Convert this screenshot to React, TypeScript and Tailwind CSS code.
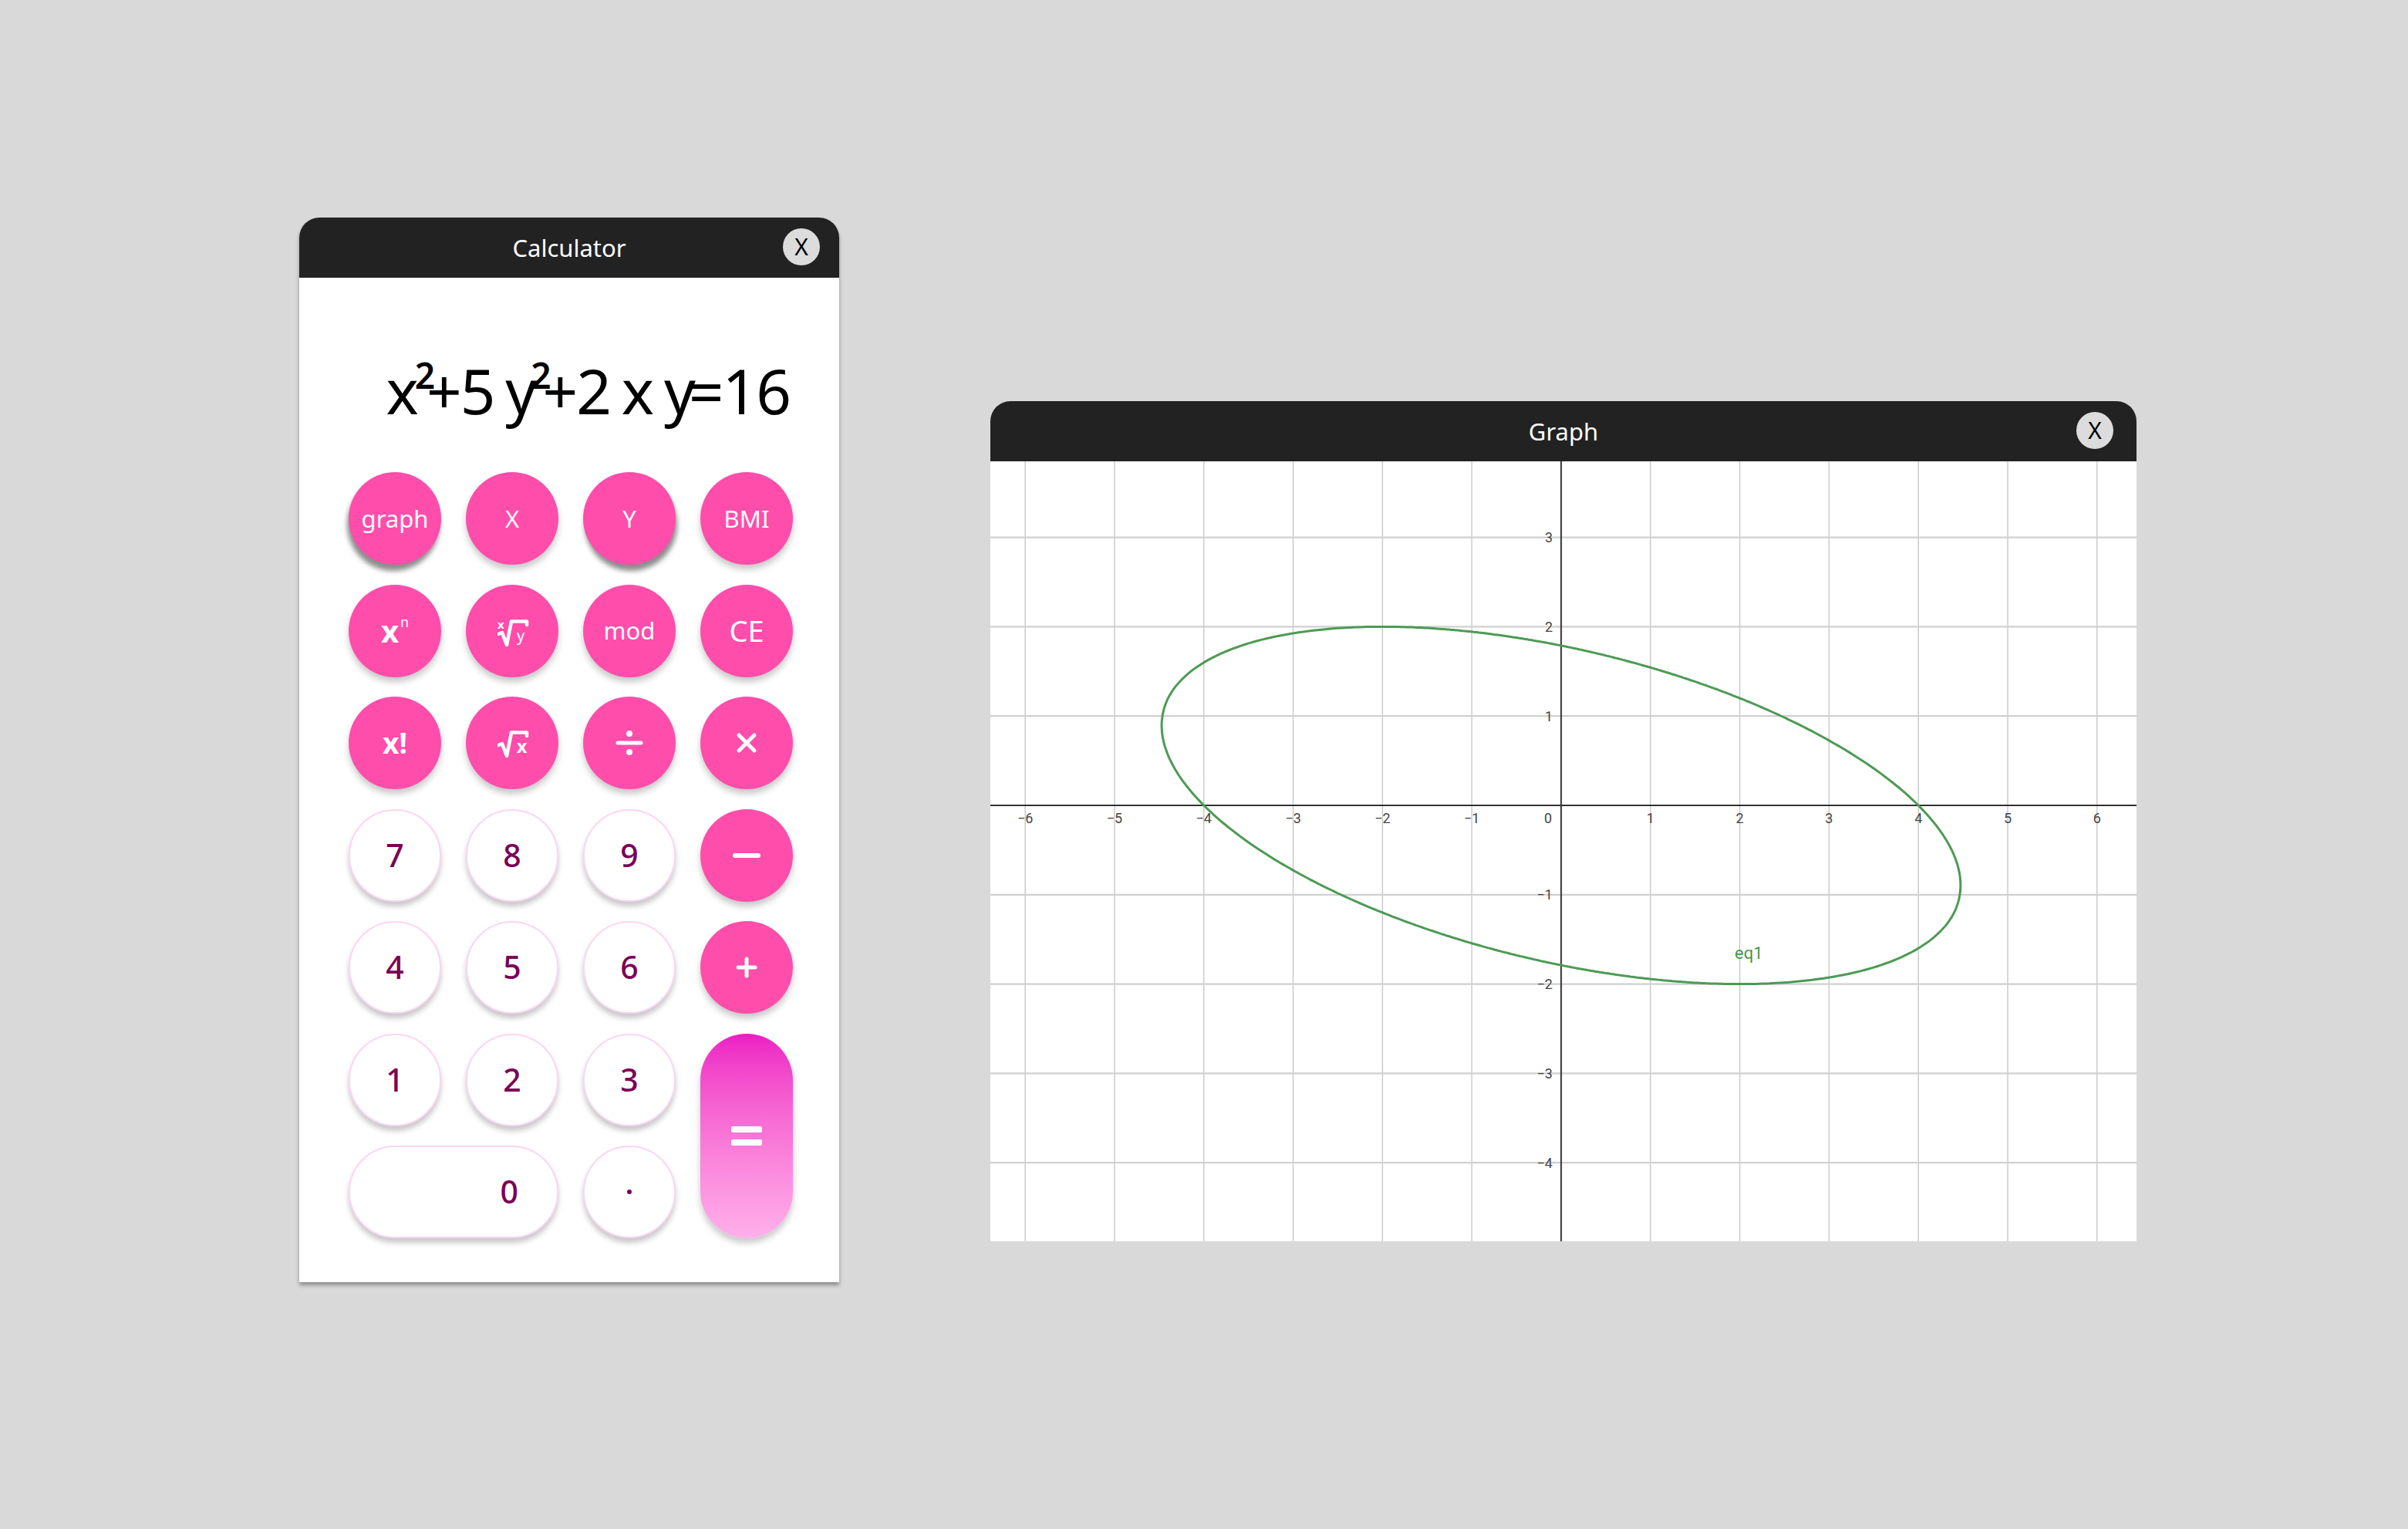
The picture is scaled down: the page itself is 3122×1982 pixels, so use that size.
import React from "react";

const U = 115.8;
const OX = 740;
const OY = 446;
const GW = 1486;
const GH = 1011;

function ellipsePath() {
  const pts: string[] = [];
  for (let i = 0; i <= 720; i++) {
    const t = (i / 720) * Math.PI * 2;
    const c = Math.cos(t);
    const s = Math.sin(t);
    const r = Math.sqrt(16 / (c * c + 5 * s * s + 2 * s * c));
    pts.push(`${(OX + r * c * U).toFixed(1)},${(OY - r * s * U).toFixed(1)}`);
  }
  return "M" + pts.join("L") + "Z";
}

function label(n: number) {
  return n < 0 ? `\u2212${-n}` : `${n}`;
}

function GraphPlot() {
  const xs = [-6, -5, -4, -3, -2, -1, 1, 2, 3, 4, 5, 6];
  const ys = [-4, -3, -2, -1, 1, 2, 3];
  return (
    <svg width={GW} height={GH} className="block">
      <rect x={0} y={0} width={GW} height={GH} fill="#ffffff" />
      {xs.map((k) => (
        <line key={"vx" + k} x1={OX + k * U} x2={OX + k * U} y1={0} y2={GH} stroke="#c8c8c8" strokeWidth={1.4} />
      ))}
      {ys.map((k) => (
        <line key={"hy" + k} x1={0} x2={GW} y1={OY - k * U} y2={OY - k * U} stroke="#d0d0d0" strokeWidth={2.2} />
      ))}
      <line x1={OX} x2={OX} y1={0} y2={GH} stroke="#444444" strokeWidth={2.2} />
      <line x1={0} x2={GW} y1={OY} y2={OY} stroke="#333333" strokeWidth={2} />
      <g fontFamily="Roboto, sans-serif" fontSize={18} fill="#454545">
        {xs.map((k) => (
          <text key={"lx" + k} x={OX + k * U} y={OY + 23} textAnchor="middle">
            {label(k)}
          </text>
        ))}
        <text x={OX - 17} y={OY + 23} textAnchor="middle">
          0
        </text>
        {ys.map((k) => (
          <text key={"ly" + k} x={OX - 11} y={OY - k * U + 6.5} textAnchor="end">
            {label(k)}
          </text>
        ))}
      </g>
      <path d={ellipsePath()} fill="none" stroke="#4d9a55" strokeWidth={3} />
      <text x={965} y={645} fontFamily="Roboto, sans-serif" fontSize={22} fill="#3f9a4a">
        eq1
      </text>
    </svg>
  );
}

function RootXY() {
  return (
    <svg width={44} height={42} viewBox="0 -4 44 42" className="ml-[6px]">
      <text x={0} y={14} fontFamily="Noto Sans, sans-serif" fontSize={15} fontWeight={700} fill="#fff">
        x
      </text>
      <path d="M1 21 L6 19 L12 35 L18 4.5 L38 4.5 L38 9" fill="none" stroke="#fff" strokeWidth={4.5} strokeLinejoin="round" strokeLinecap="round" />
      <text x={25} y={30} fontFamily="Noto Sans, sans-serif" fontSize={20} fill="#fff">
        y
      </text>
    </svg>
  );
}

function RootX() {
  return (
    <svg width={44} height={38} viewBox="0 0 44 38" className="ml-[6px] mt-[2px]">
      <path d="M1 21 L6 19 L12 35 L18 4.5 L38 4.5 L38 9" fill="none" stroke="#fff" strokeWidth={4.5} strokeLinejoin="round" strokeLinecap="round" />
      <text x={25} y={31} fontFamily="Noto Sans, sans-serif" fontSize={23} fontWeight={700} fill="#fff">
        x
      </text>
    </svg>
  );
}

function Bars({ kind }: { kind: "minus" | "plus" | "times" | "divide" }) {
  if (kind === "minus")
    return (
      <svg width={36} height={10} viewBox="0 0 36 10">
        <line x1={3} y1={5} x2={33} y2={5} stroke="#fff" strokeWidth={6} strokeLinecap="round" />
      </svg>
    );
  if (kind === "plus")
    return (
      <svg width={28} height={28} viewBox="0 0 28 28">
        <line x1={3} y1={14} x2={25} y2={14} stroke="#fff" strokeWidth={5} strokeLinecap="round" />
        <line x1={14} y1={3} x2={14} y2={25} stroke="#fff" strokeWidth={5} strokeLinecap="round" />
      </svg>
    );
  if (kind === "times")
    return (
      <svg width={30} height={30} viewBox="0 0 30 30">
        <line x1={5} y1={5} x2={25} y2={25} stroke="#fff" strokeWidth={5} strokeLinecap="round" />
        <line x1={25} y1={5} x2={5} y2={25} stroke="#fff" strokeWidth={5} strokeLinecap="round" />
      </svg>
    );
  return (
    <svg width={36} height={34} viewBox="0 0 36 34">
      <circle cx={18} cy={5} r={4} fill="#fff" />
      <line x1={3} y1={17} x2={33} y2={17} stroke="#fff" strokeWidth={5} strokeLinecap="round" />
      <circle cx={18} cy={29} r={4} fill="#fff" />
    </svg>
  );
}

const pink =
  "w-[120px] h-[120px] rounded-full bg-[#ff4dab] text-white flex items-center justify-center shadow-[0_6px_8px_rgba(0,0,0,0.22)]";
const pinkDark =
  "w-[120px] h-[120px] rounded-full bg-[#ff4dab] text-white flex items-center justify-center";
const digit =
  "w-[120px] h-[120px] rounded-full bg-white border-2 border-[#fbd6f2] text-[#7b0058] text-[41px] font-medium flex items-center justify-center shadow-[0_6px_7px_rgba(0,0,0,0.22)]";

function Calculator() {
  return (
    <div className="absolute left-[388px] top-[282px] w-[700px] rounded-t-[26px] bg-white shadow-[0_4px_5px_rgba(0,0,0,0.35)] font-['Noto_Sans',sans-serif]">
      <div className="relative h-[78px] rounded-t-[26px] bg-[#222222] flex items-center justify-center">
        <span className="text-white text-[31px]">Calculator</span>
        <div className="absolute right-[25px] top-[14px] w-[48px] h-[48px] rounded-full bg-[#dcdcdc] flex items-center justify-center text-black text-[30px] leading-none">
          X
        </div>
      </div>
      <div className="h-[252px] pt-[106px] pr-[64px] text-right text-black text-[80px] leading-none tracking-[-2px] [word-spacing:-4px] whitespace-nowrap">
        x<span className="relative -top-[33px] text-[46px] font-semibold -ml-[3px] -mr-[9px]">2</span>+5 y
        <span className="relative -top-[33px] text-[46px] font-semibold -ml-[6px] -mr-[9px]">2</span>+2 x y
        <span className="-ml-[7px]">=16</span>
      </div>
      <div className="grid grid-cols-4 gap-x-[32px] gap-y-[25.5px] auto-rows-[120px] pl-[64px] pr-[60px] pb-[57px]">
        <div className={pinkDark + " shadow-[-2px_8px_6px_rgba(0,0,0,0.45)] text-[31px]"}>graph</div>
        <div className={pink + " text-[31px]"}>X</div>
        <div className={pinkDark + " shadow-[2px_8px_6px_rgba(0,0,0,0.45)] text-[31px]"}>Y</div>
        <div className={pink + " text-[31px]"}>BMI</div>

        <div className={pink}>
          <span className="text-[40px] font-bold leading-none">x</span>
          <span className="text-[18px] leading-none self-start mt-[39px] ml-[2px]">n</span>
        </div>
        <div className={pink}>
          <RootXY />
        </div>
        <div className={pink + " text-[31px]"}>mod</div>
        <div className={pink + " text-[38px]"}>CE</div>

        <div className={pink + " text-[37px] font-bold"}>x!</div>
        <div className={pink}>
          <RootX />
        </div>
        <div className={pink}>
          <Bars kind="divide" />
        </div>
        <div className={pink}>
          <Bars kind="times" />
        </div>

        <div className={digit}>7</div>
        <div className={digit}>8</div>
        <div className={digit}>9</div>
        <div className={pink}>
          <Bars kind="minus" />
        </div>

        <div className={digit}>4</div>
        <div className={digit}>5</div>
        <div className={digit}>6</div>
        <div className={pink}>
          <Bars kind="plus" />
        </div>

        <div className={digit}>1</div>
        <div className={digit}>2</div>
        <div className={digit}>3</div>
        <div className="row-span-2 rounded-full bg-gradient-to-b from-[#ec1cc3] to-[#ffb0ea] flex flex-col items-center justify-center gap-[9px] shadow-[0_6px_8px_rgba(0,0,0,0.22)]">
          <div className="w-[40px] h-[8px] rounded-[2px] bg-white" />
          <div className="w-[40px] h-[8px] rounded-[2px] bg-white" />
        </div>

        <div className="col-span-2 h-[120px] rounded-full bg-white border-2 border-[#fbd6f2] text-[#7b0058] text-[41px] font-medium flex items-center justify-end pr-[50px] shadow-[0_6px_7px_rgba(0,0,0,0.22)]">
          0
        </div>
        <div className={digit}>
          <span className="w-[6px] h-[6px] rounded-full bg-[#7b0058]" />
        </div>
      </div>
    </div>
  );
}

function GraphWindow() {
  return (
    <div className="absolute left-[1284px] top-[520px] w-[1486px] font-['Noto_Sans',sans-serif]">
      <div className="relative h-[78px] rounded-t-[26px] bg-[#222222] flex items-center justify-center">
        <span className="text-white text-[31px]">Graph</span>
        <div className="absolute right-[30px] top-[14px] w-[48px] h-[48px] rounded-full bg-[#dcdcdc] flex items-center justify-center text-black text-[30px] leading-none">
          X
        </div>
      </div>
      <GraphPlot />
    </div>
  );
}

export default function App() {
  return (
    <div className="relative w-[3122px] h-[1982px] bg-[#d9d9d9] overflow-hidden">
      <Calculator />
      <GraphWindow />
    </div>
  );
}
